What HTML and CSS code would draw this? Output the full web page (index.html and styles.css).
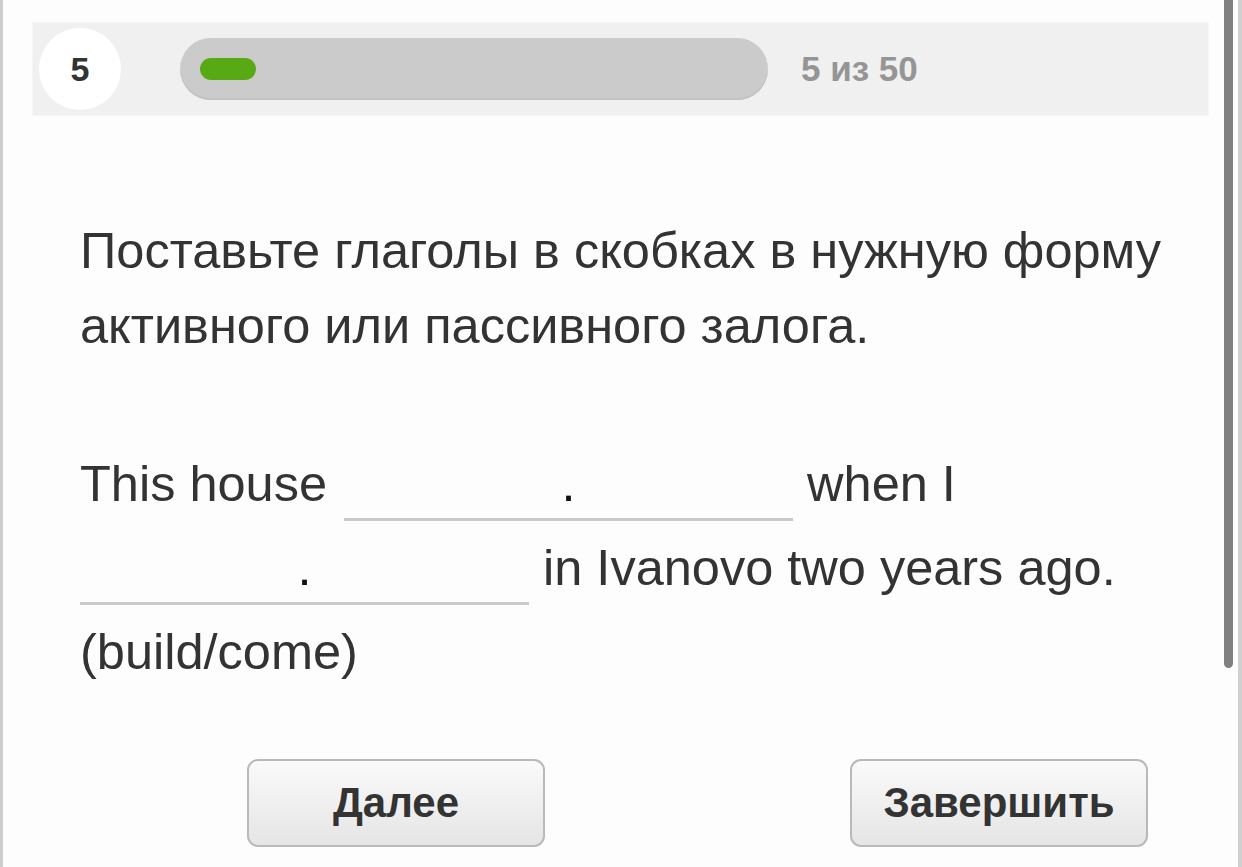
FILE: index.html
```html
<!DOCTYPE html>
<html>
<head>
  <title>Тест</title>
  <meta charset=utf-8>
  <meta name=viewport content="width=device-width, initial-scale=1">
  <link rel="stylesheet" href="styles.css">
</head>
<body>
<div class="frame">
  <div class="card">
    <div class="header">
      <div class="num">5</div>
      <div class="track"><div class="fill"></div></div>
      <div class="count">5 из 50</div>
    </div>

    <p class="task">Поставьте глаголы в скобках в нужную форму активного или пассивного залога.</p>

    <p class="sentence">This house <span class="blank first">.</span> when I <span class="blank">.</span> in Ivanovo two years ago. (build/come)</p>

    <div class="buttons">
      <button class="btn">Далее</button>
      <button class="btn">Завершить</button>
    </div>
  </div>
  <div class="thumb"></div>
</div>
</body>
</html>
```

FILE: styles.css
```css
html {
  padding: 0;
  margin: 0;
}
body {
  margin: 0;
  padding: 0;
  background: #fff;
  font-family: "Liberation Sans", Arial, sans-serif;
  color: #333;
}
.frame {
  position: relative;
  box-sizing: border-box;
  width: 1242px;
  height: 867px;
  overflow: hidden;
  border-left: 3px solid #cdcdcd;
  border-right: 4px solid #d0d0d0;
  background: #fdfdfd;
}
.card {
  margin-left: 30px;
  width: 1175px;
  padding-top: 23px;
}

/* верхняя панель с прогрессом */
.header {
  display: flex;
  align-items: center;
  box-sizing: border-box;
  height: 92px;
  padding-left: 6px;
  background: #f0f0f0;
  box-shadow: 0 0 0 1px #f6f6f6;
}
.num {
  display: flex;
  align-items: center;
  justify-content: center;
  width: 82px;
  height: 82px;
  border-radius: 50%;
  background: #fff;
  font-size: 34px;
  font-weight: bold;
  color: #333;
}
.track {
  box-sizing: border-box;
  margin-left: 59px;
  width: 588px;
  height: 62px;
  padding: 20px;
  border-radius: 31px;
  background: #cbcbcb;
  box-shadow: inset 0 -2px 0 #c2c2c2;
}
.fill {
  width: 56px;
  height: 22px;
  border-radius: 11px;
  background: #58aa14;
}
.count {
  margin-left: 33px;
  font-size: 35px;
  font-weight: bold;
  color: #959595;
}

/* задание */
.task {
  margin: 98px 0 0;
  padding: 0 30px 0 47px;
  font-size: 50.5px;
  line-height: 75px;
  color: #333;
}
.sentence {
  margin: 79px 0 0;
  padding: 0 30px 0 47px;
  font-size: 50.5px;
  line-height: 84px;
  color: #333;
}
.blank {
  display: inline-block;
  width: 449px;
  line-height: 69px;
  text-align: center;
  color: #111;
  border-bottom: 3px solid #c9c9c9;
}
.blank.first {
  margin-left: 3px;
}

/* кнопки */
.buttons {
  display: flex;
  margin-top: 65px;
  padding-left: 214px;
  gap: 305px;
}
.btn {
  width: 298px;
  height: 88px;
  border: 2px solid #b9b9b9;
  border-radius: 11px;
  background: linear-gradient(#fafafa, #e5e5e5);
  font-family: "Liberation Sans", Arial, sans-serif;
  font-size: 42px;
  font-weight: bold;
  color: #333;
}

.thumb {
  position: absolute;
  top: 0;
  left: 1221px;
  width: 9px;
  height: 668px;
  border-radius: 0 0 5px 5px;
  background: #808080;
}
```
